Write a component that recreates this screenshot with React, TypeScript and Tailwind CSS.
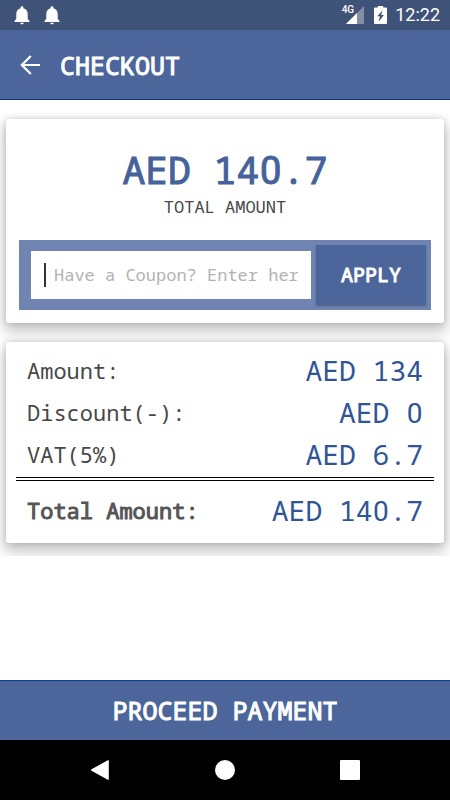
import React from 'react';

const ROWS = [
  { label: 'Amount:', value: 'AED 134' },
  { label: 'Discount(-):', value: 'AED 0' },
  { label: 'VAT(5%)', value: 'AED 6.7' }
];

// the mono font marks its zeros, so plain ones are taken from Roboto
const Money: React.FC<{ value: string }> = ({ value }) => (
  <>
    {value.split(/(0)/).map((part, i) =>
      part === '0' ? <span key={i} className="inline-block w-[0.6em] text-center leading-none font-[Roboto,sans-serif]">0</span> : part
    )}
  </>
);

const BellIcon = () => (
  <svg viewBox="0 0 16 19" className="h-[19px] w-4 fill-white" aria-hidden="true">
    <path d="M8 0.300c-.9 0-1.400.6-1.400 1.400v.5C4 2.800 2.300 5.200 2.300 7.800v5L.5 15v1h15v-1l-1.800-2.200v-5c0-2.600-1.700-5-4.300-5.600v-.5C9.400.9 8.900.3 8 .3zM6.200 16.800c.2 1 .9 1.500 1.800 1.500s1.600-.5 1.800-1.500z" />
  </svg>
);

const StatusBar = () => (
  <div className="flex h-[30px] items-center justify-between bg-[#3f5277] pl-[14px] pr-[10px]">
    <div className="flex gap-[14px]">
      <BellIcon />
      <BellIcon />
    </div>
    <div className="flex items-center font-[Roboto,sans-serif] text-white">
      <span className="-mr-2 -mt-[10px] text-[10px] leading-none font-medium">4G</span>
      <svg viewBox="0 0 18 18" className="mr-[10px] h-[18px] w-[18px]" aria-hidden="true">
        <path d="M18 0v18H0z" fill="#8490a8" />
        <path d="M11 7v11H0z" fill="#fff" />
      </svg>
      <svg viewBox="0 0 12 18" className="mr-2 h-[18px] w-[13px]" preserveAspectRatio="none" aria-hidden="true">
        <path d="M3.500 0h5v1.500H11q1 0 1 1V17q0 1-1 1H1q-1 0-1-1V2.500q0-1 1-1h2.500z" fill="#fff" />
        <path d="M7.800 4.500 3 10.300h2.500L4.300 15.800 9.200 9H6.600z" fill="#3f5277" />
      </svg>
      <span className="text-[18px] leading-[22px]">12:22</span>
    </div>
  </div>
);

const Header = () => (
  <header className="flex h-[70px] items-center border-b border-[#0b357e] bg-[#4c669b] pl-5 text-white">
    <button type="button" aria-label="Back" className="mr-5">
      <svg viewBox="0 0 20 20" className="h-5 w-5" fill="none" stroke="#fff" strokeWidth="2.200" aria-hidden="true">
        <path d="M20 10H1.800M10.800 1 1.800 10l9 9" />
      </svg>
    </button>
    <h1 className="text-[25px] leading-8 [-webkit-text-stroke:1px]">CHECKOUT</h1>
  </header>
);

const TotalCard = () => (
  <section className="rounded-[3px] bg-white px-[13px] pt-[26px] pb-[13px] text-center shadow-[0_0_6px_rgba(0,0,0,0.16),0_7px_14px_2px_rgba(0,0,0,0.22)]">
    <p className="text-[38px] leading-12 text-[#45629b] [-webkit-text-stroke:1px]"><Money value="AED 140.7" /></p>
    <p className="mt-[2px] text-[17px] leading-6 text-[#484848]">TOTAL AMOUNT</p>
    <form className="mt-[21px] flex gap-[5px] bg-[#6f84b0] p-[5px] pl-3" onSubmit={(e) => e.preventDefault()}>
      <label className="my-[6px] flex min-w-0 flex-1 items-center gap-2 bg-white px-[13px]">
        <span className="h-6 w-[2px] shrink-0 bg-[#333]" />
        <input type="text" aria-label="Coupon" className="w-full min-w-0 text-[17px] leading-6 text-[#484848] outline-none placeholder:text-[#b2b2b2]" placeholder="Have a Coupon? Enter here" />
      </label>
      <button type="submit" className="h-[60px] w-[110px] bg-[#4c669b] text-[20px] text-white shadow-[0_1px_2px_rgba(0,0,0,0.3)] [-webkit-text-stroke:1px]">APPLY</button>
    </form>
  </section>
);

const BreakdownCard = () => (
  <section className="rounded-[3px] bg-white px-[10px] pt-[7px] pb-[10px] shadow-[0_0_6px_rgba(0,0,0,0.16),0_7px_14px_2px_rgba(0,0,0,0.22)]">
    <dl>
      {ROWS.map((row) => (
        <div key={row.label} className="flex h-[42px] items-center justify-between px-[11px]">
          <dt className="text-[22px] text-[#484848]">{row.label}</dt>
          <dd className="text-[28px] text-[#2f5597]"><Money value={row.value} /></dd>
        </div>
      ))}
      <div className="mt-[2px] flex h-[56px] items-center justify-between border-t-4 border-double border-black px-[11px] pt-[6px]">
        <dt className="text-[22px] text-[#555] [-webkit-text-stroke:1px]">Total Amount:</dt>
        <dd className="text-[28px] text-[#2f5597]"><Money value="AED 140.7" /></dd>
      </div>
    </dl>
  </section>
);

const NavBar = () => (
  <nav className="flex h-[60px] items-center justify-center gap-[105px] bg-black">
    <button type="button" aria-label="Back">
      <svg viewBox="0 0 20 20" className="h-5 w-5 fill-white" aria-hidden="true"><path d="M18.800.9v18.200q0 1.200-1 .6L1.500 10.700q-1-.7 0-1.400L17.800.3q1-.6 1 .6z" /></svg>
    </button>
    <button type="button" aria-label="Home" className="h-5 w-5 rounded-full bg-white" />
    <button type="button" aria-label="Recents" className="h-5 w-5 rounded-[1px] bg-white" />
  </nav>
);

export default function App() {
  return (
    <div className="flex min-h-screen flex-col bg-white font-['Noto_Sans_Mono','DejaVu_Sans_Mono',monospace]">
      <StatusBar />
      <Header />
      <main className="flex flex-col gap-[19px] overflow-hidden px-[6px] pt-[19px] pb-[13px]">
        <TotalCard />
        <BreakdownCard />
      </main>
      <button type="button" className="mt-auto h-[60px] border-t border-[#0b3f94] bg-[#4c669b] text-[25px] text-white [-webkit-text-stroke:1px]">PROCEED PAYMENT</button>
      <NavBar />
    </div>
  );
}
